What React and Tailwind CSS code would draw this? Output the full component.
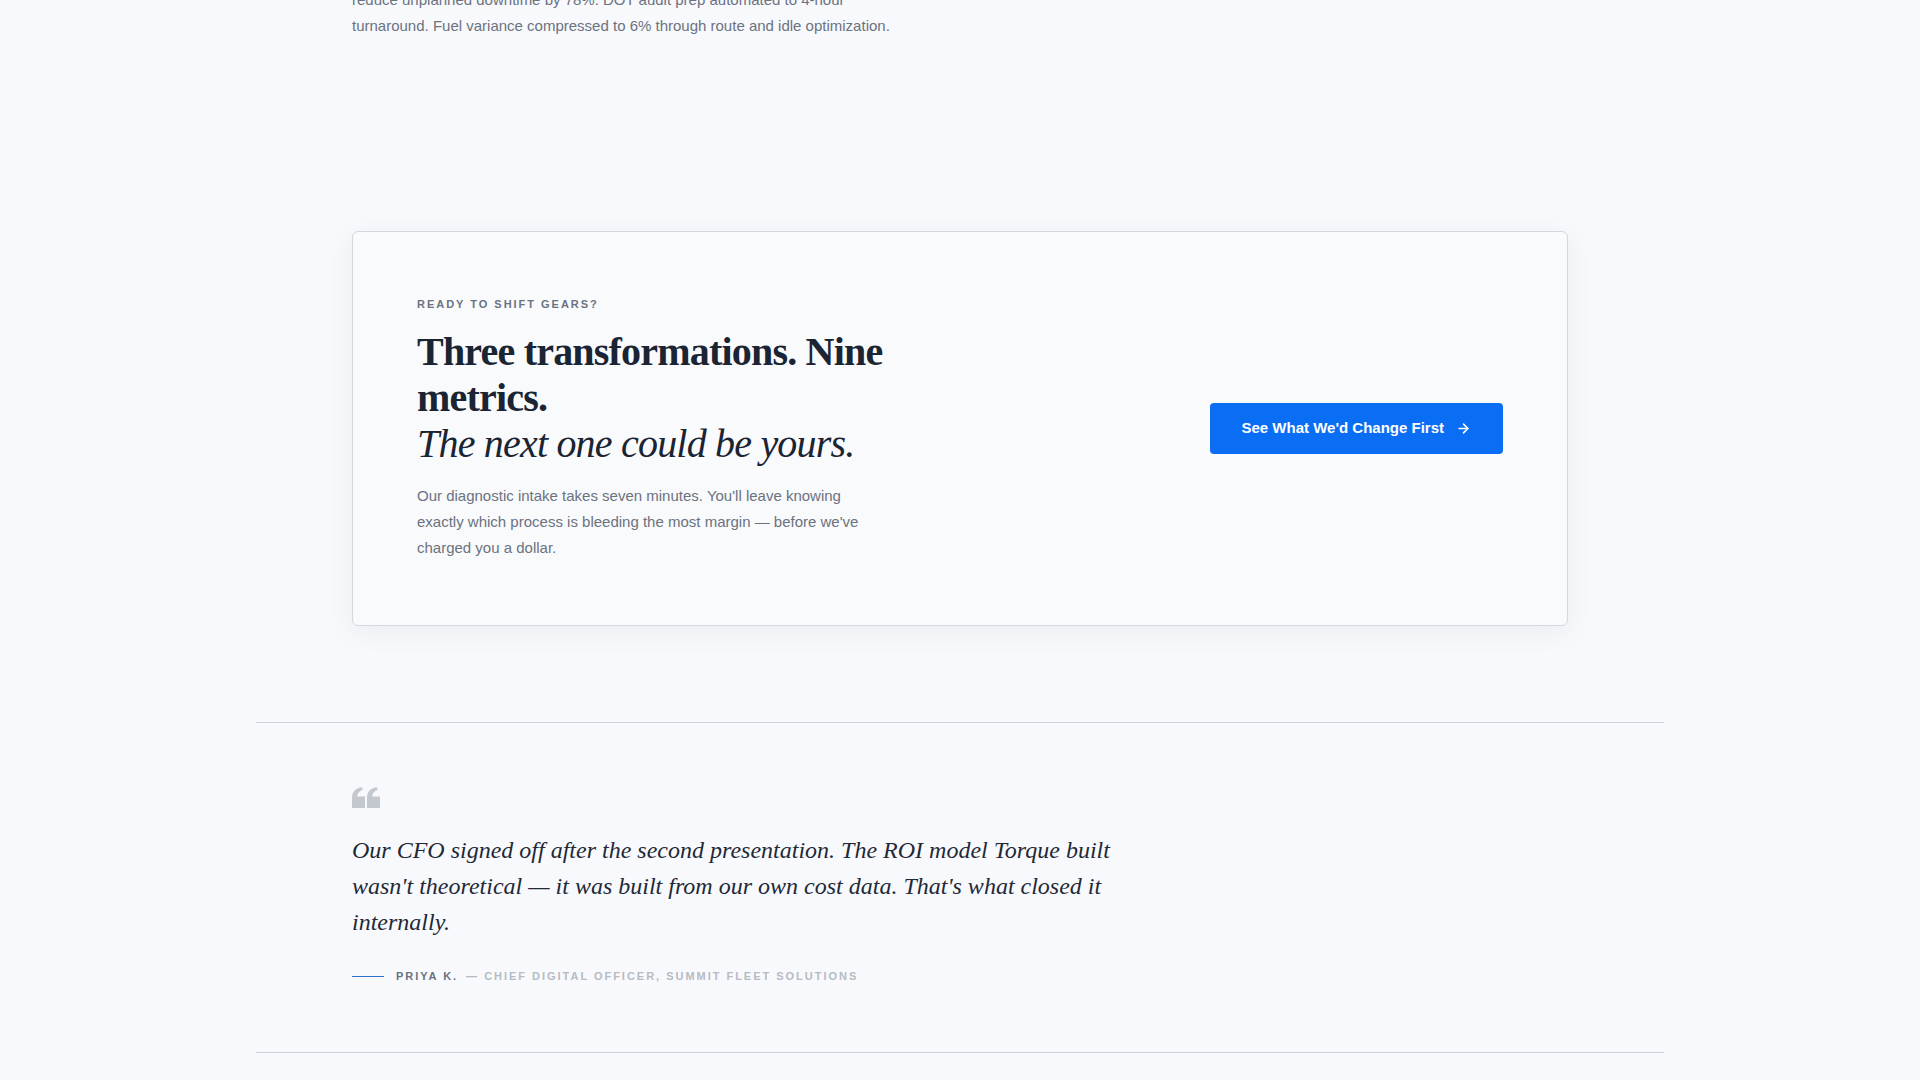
import { ArrowRight } from "lucide-react";

const serif = { fontFamily: '"Liberation Serif", "Times New Roman", serif' };

function QuoteMark() {
  return (
    <svg width="28" height="21" viewBox="0 0 28 21" className="text-[#c3c7ce]" fill="currentColor">
      <path d="M0 21V11C0 5 3.2 1.5 9.6 0l1.2 2.7C7.1 4 5.4 6.3 5.2 9.4H13V21z" />
      <path d="M15 21V11C15 5 18.2 1.5 24.6 0l1.2 2.7C22.1 4 20.4 6.3 20.2 9.4H28V21z" />
    </svg>
  );
}

function CtaCard() {
  return (
    <div className="flex items-center justify-between rounded-md border border-[#d3d7de] bg-[#f9fafc] p-16 shadow-[0_6px_28px_rgba(15,23,42,0.06)]">
      <div className="max-w-xl">
        <p className="text-[11px] font-bold uppercase leading-4 tracking-[0.18em] text-[#6b7280]">
          Ready to shift gears?
        </p>
        <h2
          className="mt-[17px] text-[40px] font-bold leading-[46px] tracking-[-0.02em] text-[#1a2433]"
          style={serif}
        >
          Three transformations. Nine metrics.
          <span className="block font-normal italic">The next one could be yours.</span>
        </h2>
        <p className="mt-4 max-w-md text-[15px] leading-[26px] text-[#6b7280]">
          Our diagnostic intake takes seven minutes. You'll leave knowing exactly which process is
          bleeding the most margin — before we've charged you a dollar.
        </p>
      </div>
      <button className="flex h-[51px] items-center gap-3 rounded bg-[#0a6ef5] px-8 text-[15px] font-bold text-white">
        See What We'd Change First
        <ArrowRight size={15} strokeWidth={2.5} />
      </button>
    </div>
  );
}

function Testimonial() {
  return (
    <div className="border-y border-[#cdd1d8]">
      <div className="px-24 pb-[68px] pt-16">
        <QuoteMark />
        <blockquote
          className="mt-6 max-w-3xl text-[24px] italic leading-[36px] text-[#1f2937]"
          style={serif}
        >
          Our CFO signed off after the second presentation. The ROI model Torque built wasn't
          theoretical — it was built from our own cost data. That's what closed it internally.
        </blockquote>
        <div className="mt-7 flex items-center text-[11px] font-bold uppercase leading-4 tracking-[0.18em]">
          <span className="h-px w-8 bg-[#2f72c9]" />
          <span className="ml-3 text-[#6b7280]">Priya K.</span>
          <span className="ml-2 text-[#b6bbc3]">— Chief Digital Officer, Summit Fleet Solutions</span>
        </div>
      </div>
    </div>
  );
}

export default function App() {
  return (
    <div
      className="min-h-screen overflow-hidden bg-[#f8f9fc]"
      style={{ fontFamily: '"Liberation Sans", Arial, sans-serif' }}
    >
      <div className="mx-auto max-w-[1408px]">
        <section className="px-24 pb-24">
          <p className="-mt-[13px] max-w-[560px] text-[15px] leading-[26px] text-[#6b7280]">
            reduce unplanned downtime by 78%. DOT audit prep automated to 4-hour turnaround. Fuel
            variance compressed to 6% through route and idle optimization.
          </p>
        </section>

        <section className="px-24 pb-24 pt-24">
          <CtaCard />
        </section>

        <Testimonial />
      </div>
    </div>
  );
}
